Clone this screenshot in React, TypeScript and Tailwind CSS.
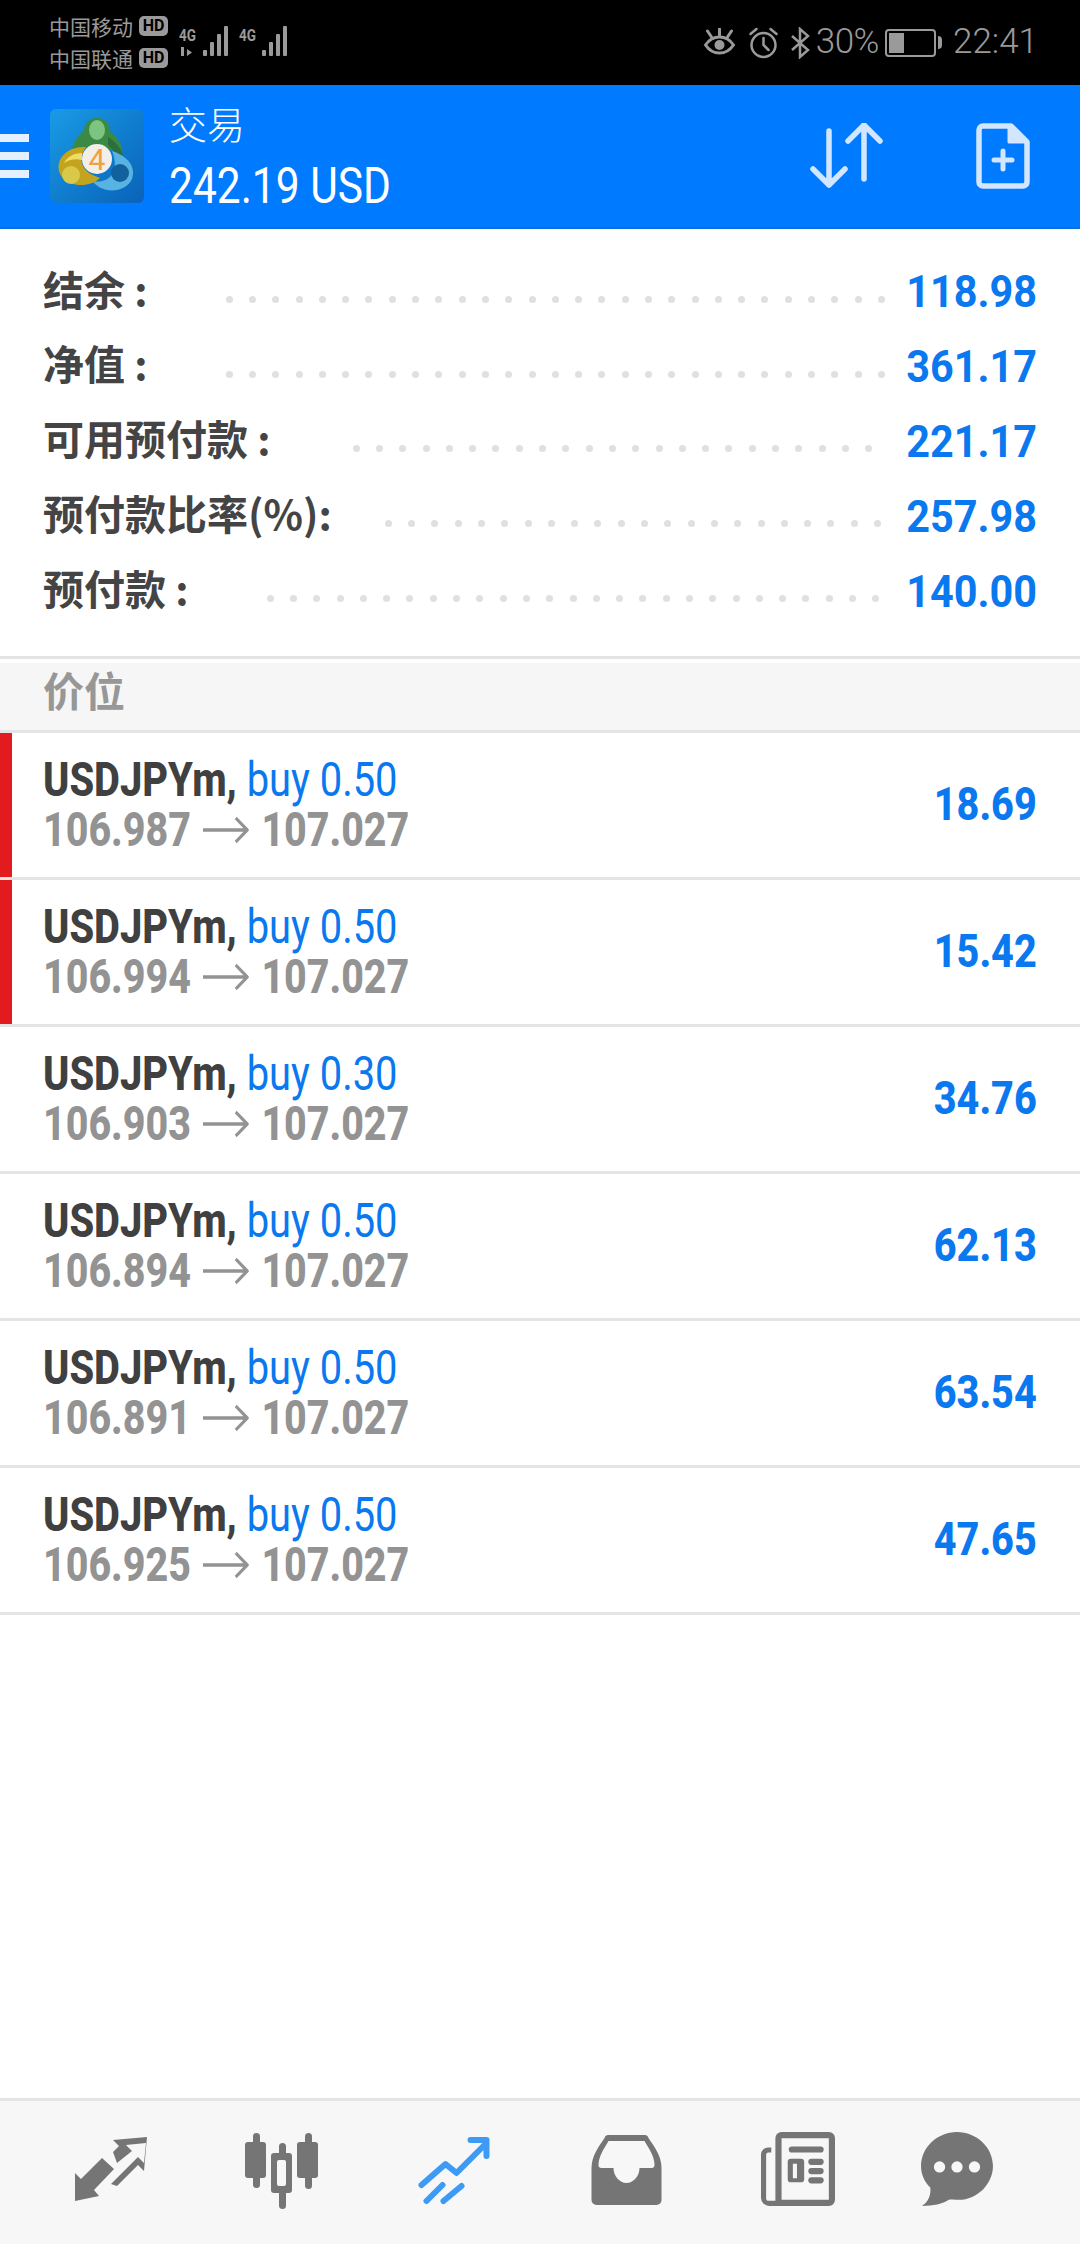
import React from 'react';

const positions = [
  { lots: '0.50', open: '106.987', profit: '18.69', flagged: true },
  { lots: '0.50', open: '106.994', profit: '15.42', flagged: true },
  { lots: '0.30', open: '106.903', profit: '34.76', flagged: false },
  { lots: '0.50', open: '106.894', profit: '62.13', flagged: false },
  { lots: '0.50', open: '106.891', profit: '63.54', flagged: false },
  { lots: '0.50', open: '106.925', profit: '47.65', flagged: false },
];

const summary = [
  { label: '结余 :', value: '118.98', gap: 'ml-[78px]', dots: 29 },
  { label: '净值 :', value: '361.17', gap: 'ml-[78px]', dots: 29 },
  { label: '可用预付款 :', value: '221.17', gap: 'ml-[82px]', dots: 23 },
  { label: '预付款比率(%):', value: '257.98', gap: 'ml-[53px]', dots: 22 },
  { label: '预付款 :', value: '140.00', gap: 'ml-[78px]', dots: 27 },
];

function HdBadge() {
  return (
    <span className="w-[29px] h-[20px] rounded-[5px] bg-[#9a9a9a] text-black text-[16px] leading-[20px] text-center font-bold font-['Roboto',sans-serif]">HD</span>
  );
}

function StatusBar() {
  return (
    <div className="h-[85px] bg-black flex items-center justify-between pl-[49px] pr-[42px] text-[#9a9a9a]">
      <div className="flex items-center">
        <div className="flex flex-col -mt-[2px] text-[21px] leading-[32px] font-['Noto_Sans_CJK_SC',sans-serif]">
          <div className="flex items-center gap-[6px]">
            中国移动
            <HdBadge />
          </div>
          <div className="flex items-center gap-[6px]">
            中国联通
            <HdBadge />
          </div>
        </div>
        <svg width="112" height="34" viewBox="0 0 112 34" className="ml-[11px]" fill="#9a9a9a">
          <text x="0" y="15" fontSize="17" fontWeight="700" fontFamily="Roboto" textLength="17" lengthAdjust="spacingAndGlyphs">4G</text>
          <text x="60" y="15" fontSize="17" fontWeight="700" fontFamily="Roboto" textLength="17" lengthAdjust="spacingAndGlyphs">4G</text>
          <path d="M2 21h3v9H2zM8 23l5 3.500-5 3.500z" />
          <rect x="24" y="24" width="4" height="6" rx="1" />
          <rect x="31" y="16" width="4" height="14" rx="1" />
          <rect x="38" y="8" width="4" height="22" rx="1" />
          <rect x="45" y="0" width="4" height="30" rx="1" />
          <rect x="83" y="24" width="4" height="6" rx="1" />
          <rect x="90" y="16" width="4" height="14" rx="1" />
          <rect x="97" y="8" width="4" height="22" rx="1" />
          <rect x="104" y="0" width="4" height="30" rx="1" />
        </svg>
      </div>
      <div className="flex items-center font-['Roboto',sans-serif] text-[35px] font-light">
        <svg width="33" height="30" viewBox="0 0 32 30" fill="none" stroke="#9a9a9a" strokeWidth="3" strokeLinecap="round">
          <path d="M2 17c4-6 9-8 14-8s10 2 14 8c-4 6-9 8-14 8s-10-2-14-8z" />
          <circle cx="16" cy="17" r="5" fill="#9a9a9a" stroke="none" />
          <path d="M4 3l4 6M16 1v6M28 3l-4 6" />
        </svg>
        <svg width="31" height="32" viewBox="0 0 30 32" fill="none" stroke="#9a9a9a" strokeWidth="2.500" strokeLinecap="round" className="ml-[12px]">
          <circle cx="15" cy="18" r="12" />
          <path d="M15 11v7l5 5M2 7l6-5M28 7l-6-5" />
        </svg>
        <svg width="20" height="32" viewBox="0 0 20 32" fill="none" stroke="#9a9a9a" strokeWidth="2.500" className="ml-[11px]">
          <path d="M2 9l16 14-8 7V2l8 7L2 23" />
        </svg>
        <span className="ml-[6px] tracking-[-0.5px]">30%</span>
        <div className="ml-[6px] flex items-center">
          <div className="w-[51px] h-[28px] border-2 border-[#9a9a9a] rounded-[4px] p-[2px]">
            <div className="w-[15px] h-full bg-[#9a9a9a]" />
          </div>
          <div className="w-[4px] h-[13px] bg-[#9a9a9a] ml-[2px] rounded-r-sm" />
        </div>
        <span className="ml-[11px]">22:41</span>
      </div>
    </div>
  );
}

function AppLogo() {
  return (
    <div className="w-[94px] h-[94px] rounded-[6px] bg-gradient-to-br from-[#1a9be6] to-[#0a62b8] ml-[21px] shrink-0">
      <svg width="94" height="94" viewBox="0 0 94 94">
        <path d="M47 9c9 0 13 7 13 13 8 6 13 15 12 24-5-5-13-7-25-5-12-2-20 0-25 5-1-9 4-18 12-24 0-6 4-13 13-13z" fill="#3a8a45" />
        <ellipse cx="47" cy="21" rx="8" ry="10" fill="#7cc480" />
        <path d="M58 36c7 7 13 14 14 23 5-11-1-23-14-31z" fill="#2c6f3a" />
        <path d="M62 42c10 3 20 10 21 20 1 10-6 17-16 19-11 2-20-3-25-9 9 2 17-1 21-8 3-7 2-15-1-22z" fill="#58b2e2" />
        <circle cx="70" cy="64" r="9" fill="#12609c" />
        <path d="M36 38c-4 6-6 12-3 19 3 6 9 9 17 12-7 7-20 9-30 5-9-4-13-12-11-20 2-10 14-17 27-16z" fill="#c4a31f" />
        <path d="M32 44c-8 0-15 4-18 10 5-3 11-5 18-3z" fill="#eedd62" />
        <circle cx="21" cy="66" r="9" fill="#d9c94a" />
        <circle cx="47" cy="50" r="15" fill="#f3efe8" />
        <text x="47" y="61" textAnchor="middle" fontSize="30" fontFamily="Roboto" fill="#f0a040">4</text>
      </svg>
    </div>
  );
}

function Header() {
  return (
    <div className="h-[144px] bg-[#007aff] border-b-[2px] border-[#0a6fd8] flex items-center text-white">
      <div className="flex flex-col gap-[10px] w-[29px] shrink-0">
        <div className="h-[8px] bg-[#e4f0ff]" />
        <div className="h-[8px] bg-[#e4f0ff]" />
        <div className="h-[8px] bg-[#e4f0ff]" />
      </div>
      <AppLogo />
      <div className="ml-[25px] flex flex-col">
        <span className="text-[38px] leading-[46px] font-['Noto_Sans_CJK_SC',sans-serif] font-light mt-[3px]">交易</span>
        <span className="text-[50px] leading-[58px] mt-[11px] font-['Roboto',sans-serif] origin-left scale-x-[0.85] whitespace-nowrap">242.19 USD</span>
      </div>
      <svg width="74" height="66" viewBox="0 0 74 66" fill="none" stroke="#d2e6ff" strokeWidth="5.500" strokeLinecap="round" strokeLinejoin="round" className="ml-auto mr-[92px]">
        <path d="M19 8v54M3 46l16 16 16-16M54 2v54M38 18L54 2l16 16" />
      </svg>
      <svg width="54" height="66" viewBox="0 0 54 66" fill="none" stroke="#d2e6ff" strokeLinejoin="round" className="mr-[50px]">
        <path d="M3 7a4 4 0 0 1 4-4h28l16 16v40a4 4 0 0 1-4 4H7a4 4 0 0 1-4-4z" strokeWidth="5.500" />
        <path d="M33 3v16h18z" fill="#d2e6ff" strokeWidth="3" />
        <path d="M27 28v18M18 37h18" strokeWidth="5" strokeLinecap="round" />
      </svg>
    </div>
  );
}

function SummaryRow({ label, value, gap, dots }: { label: string; value: string; gap: string; dots: number }) {
  return (
    <div className="h-[74.8px] flex items-center pl-[43px] pr-[43px]">
      <span className="mb-[8px] text-[41px] font-bold text-[#444444] font-['Noto_Sans_CJK_SC',sans-serif] whitespace-nowrap">{label}</span>
      <div className={`mt-[14px] flex gap-[16.300px] ${gap}`}>
        {Array.from({ length: dots }).map((_, i) => (
          <span key={i} className="w-[7px] h-[7px] rounded-full bg-[#e0e0e0]" />
        ))}
      </div>
      <span className="ml-auto text-[44px] font-bold text-[#0a78ee] font-['Roboto',sans-serif] origin-right scale-x-[0.94]">{value}</span>
    </div>
  );
}

function PositionRow({ lots, open, profit, flagged }: { lots: string; open: string; profit: string; flagged: boolean }) {
  return (
    <div className="h-[147px] flex border-b-[3px] border-[#e4e4e4]">
      <div className={`w-[12px] ${flagged ? 'bg-[#e21b1f]' : ''}`} />
      <div className="pl-[31px] pt-[21px] flex flex-col font-['Roboto',sans-serif] whitespace-nowrap">
        <div className="text-[48px] leading-[52px] origin-left scale-x-[0.83]">
          <span className="font-extrabold text-[#404040]">USDJPYm, </span>
          <span className="text-[#0a78ee]">buy {lots}</span>
        </div>
        <div className="flex items-center text-[48px] leading-[48px] font-extrabold text-[#939393] origin-left scale-x-[0.82]">
          {open}
          <svg width="56" height="28" viewBox="0 0 56 28" fill="none" stroke="#939393" strokeWidth="3.500" className="mx-[15px]">
            <path d="M0 14h54M40 2l14 12-14 12" />
          </svg>
          107.027
        </div>
      </div>
      <span className="ml-auto mr-[43px] self-center text-[46px] font-extrabold text-[#0a78ee] font-['Roboto',sans-serif] origin-right scale-x-[0.86]">{profit}</span>
    </div>
  );
}

function BottomBar() {
  return (
    <div className="h-[146px] bg-[#f7f7f7] border-t-[3px] border-[#e4e4e4] flex items-start pl-[24px] pt-[34px]">
      <div className="w-[172px] flex justify-center">
        <svg width="76" height="70" viewBox="0 0 76 70" fill="#757575">
          <path d="M1 34l6 6 21-21 12 11-20 21 5 6-24 5z" transform="translate(2 4)" />
          <path d="M41 17l6-6-6-6 34-3-3 34-6-6-21 21-6-2 27-27 6 6 2-20-20 2 6 6-15 12z" />
        </svg>
      </div>
      <div className="w-[172px] flex justify-center -mt-[2px]">
        <svg width="76" height="76" viewBox="0 0 74 76" fill="#757575">
          <rect x="8" y="0" width="7" height="55" rx="3.500" />
          <rect x="0" y="9" width="21" height="36" rx="3" />
          <rect x="34" y="10" width="7" height="66" rx="3.500" />
          <rect x="26" y="20" width="21" height="40" rx="3" />
          <rect x="32" y="27" width="9" height="26" rx="2" fill="#f7f7f7" />
          <rect x="60" y="0" width="7" height="56" rx="3.500" />
          <rect x="52" y="9" width="21" height="36" rx="3" />
        </svg>
      </div>
      <div className="w-[172px] flex justify-center">
        <svg width="73" height="70" viewBox="0 0 72 70" fill="none" stroke="#3d9bf5" strokeWidth="6" strokeLinecap="round" strokeLinejoin="round">
          <path d="M3 50l24-21 11 9 29-29M52 5h16v16M8 66l16-16M25 66l18-15" />
        </svg>
      </div>
      <div className="w-[172px] flex justify-center">
        <svg width="73" height="70" viewBox="0 0 70 70" fill="#757575">
          <path fillRule="evenodd" d="M13 3a4 4 0 0 1 3-3h38a4 4 0 0 1 3 3c6 9 13 18 13 30v32a5 5 0 0 1-5 5H5a5 5 0 0 1-5-5V33C0 21 7 12 13 3zM17 6C13 13 7 21 7 30c0 2 1 3 3 3h12c0 8 6 15 13 15s13-7 13-15h12c2 0 3-1 3-3 0-9-6-17-10-24z" />
        </svg>
      </div>
      <div className="w-[172px] flex justify-center -mt-[3px]">
        <svg width="76" height="74" viewBox="0 0 72 72" fill="#757575">
          <path fillRule="evenodd" d="M20 0h46a6 6 0 0 1 6 6v60a6 6 0 0 1-6 6H8a8 8 0 0 1-8-8V22a7 7 0 0 1 7-7h3v5H7c-1 0-2 1-2 2v43c0 1 1 2 2 2h7V6a6 6 0 0 1 6-6zm0 6v60h46V6z" />
          <rect x="27" y="14" width="34" height="6" rx="3" />
          <path fillRule="evenodd" d="M29 26h10a3 3 0 0 1 3 3v17a3 3 0 0 1-3 3H29a3 3 0 0 1-3-3V29a3 3 0 0 1 3-3zm2 5v14h4V31z" />
          <rect x="46" y="26" width="15" height="6" rx="3" />
          <rect x="46" y="35" width="15" height="6" rx="3" />
          <rect x="46" y="44" width="15" height="6" rx="3" />
        </svg>
      </div>
      <div className="w-[146px] flex justify-center -mt-[3px]">
        <svg width="72" height="74" viewBox="0 0 70 72" fill="#757575">
          <path d="M35 0c19 0 35 15 35 33S54 66 37 66c-4 0-7-1-10 0-6 4-15 6-26 6 6-4 9-11 8-18C3 48 0 41 0 33 0 15 16 0 35 0z" />
          <circle cx="18" cy="34" r="5.500" fill="#f7f7f7" />
          <circle cx="35" cy="34" r="5.500" fill="#f7f7f7" />
          <circle cx="52" cy="34" r="5.500" fill="#f7f7f7" />
        </svg>
      </div>
    </div>
  );
}

export default function App() {
  return (
    <div className="w-[1080px] h-[2244px] bg-white flex flex-col overflow-hidden">
      <StatusBar />
      <Header />
      <div className="pt-[26px] pb-[27px] border-b-[3px] border-[#e4e4e4]">
        {summary.map((row) => (
          <SummaryRow key={row.label} {...row} />
        ))}
      </div>
      <div className="mt-[4px] h-[70px] bg-[#f6f6f6] border-b-[3px] border-[#e4e4e4] pl-[43px] flex items-center">
        <span className="mb-[14px] text-[41px] font-bold text-[#979797] font-['Noto_Sans_CJK_SC',sans-serif]">价位</span>
      </div>
      <div className="flex-1">
        {positions.map((p) => (
          <PositionRow key={p.open} {...p} />
        ))}
      </div>
      <BottomBar />
    </div>
  );
}
